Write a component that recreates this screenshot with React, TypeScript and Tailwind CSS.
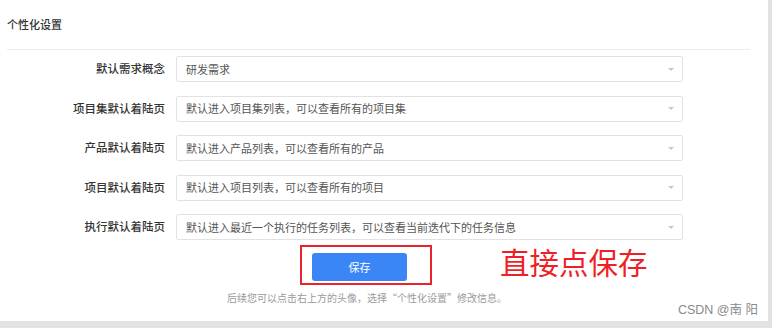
const rows = [
  { label: "默认需求概念", value: "研发需求" },
  { label: "项目集默认着陆页", value: "默认进入项目集列表，可以查看所有的项目集" },
  { label: "产品默认着陆页", value: "默认进入产品列表，可以查看所有的产品" },
  { label: "项目默认着陆页", value: "默认进入项目列表，可以查看所有的项目" },
  { label: "执行默认着陆页", value: "默认进入最近一个执行的任务列表，可以查看当前迭代下的任务信息" },
];

function SelectBox({ value }: { value: string }) {
  return (
    <div className="w-[507px] h-[26px] border border-[#e2e2e2] rounded-[2px] bg-white flex items-center justify-between pl-[9px] pr-[8px]">
      <span className="text-[11px] text-[#555]">{value}</span>
      <span className="w-0 h-0 border-l-[3px] border-r-[3px] border-t-[3px] border-l-transparent border-r-transparent border-t-[#c8c8c8]" />
    </div>
  );
}

export default function App() {
  return (
    <div
      className="w-[772px] h-[328px] bg-[#e3e3e3] overflow-hidden"
      style={{ fontFamily: '"Noto Sans CJK SC", "Noto Sans", sans-serif' }}
    >
      <div className="relative w-[768px] h-[321px] bg-white flex flex-col">
        <div className="h-[50px] flex items-center ml-[7px] mr-[18px] border-b border-[#ececec]">
          <span className="text-[11px] font-medium text-[#333]">个性化设置</span>
        </div>

        <div className="mt-[6px] flex flex-col gap-[13.5px]">
          {rows.map((r) => (
            <div key={r.label} className="flex items-center">
              <div className="w-[166px] text-right pr-[1px] text-[11.5px] font-medium text-[#333]">
                {r.label}
              </div>
              <div className="ml-[10px]">
                <SelectBox value={r.value} />
              </div>
            </div>
          ))}
        </div>

        <div className="mt-[5px] flex items-center">
          <div className="ml-[300px] w-[132px] h-[40px] border-2 border-[#e8232b] pl-[10px] pt-[6px]">
            <button className="w-[95px] h-[28px] rounded-[3px] bg-[#3b86f6] text-white text-[11px]">
              保存
            </button>
          </div>
          <span className="ml-[68px] -mt-[6px] text-[29.5px] leading-none text-[#ee1f26]">直接点保存</span>
        </div>

        <div className="mt-[5px] ml-[227px] text-[10px] text-[#9a9a9a]">
          后续您可以点击右上方的头像，选择“个性化设置”修改信息。
        </div>

        <div
          className="absolute right-[10px] bottom-[1px] text-[12.5px] text-[#8a8a8a]"
          style={{ fontFamily: '"Liberation Sans", "Noto Sans CJK SC", sans-serif' }}
        >
          CSDN @南 阳
        </div>
      </div>
    </div>
  );
}
